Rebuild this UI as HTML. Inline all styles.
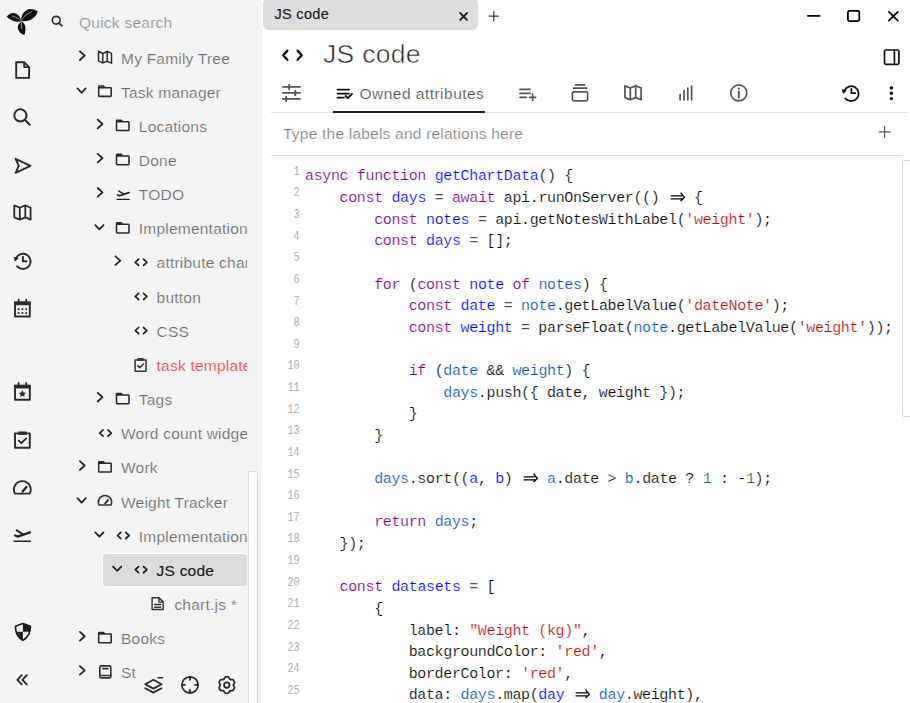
<!DOCTYPE html>
<html><head><meta charset="utf-8"><style>
*{margin:0;padding:0;box-sizing:border-box}
html,body{width:910px;height:703px;overflow:hidden;background:#fff;font-family:"Liberation Sans",sans-serif}
.t{position:absolute;white-space:pre}
#left{position:absolute;left:0;top:0;width:258px;height:703px;background:#f3f3f3}
#gut{position:absolute;left:258px;top:0;width:4px;height:703px;background:#f5f5f5}
#tab{position:absolute;left:262.5px;top:-2.5px;width:215.2px;height:32.7px;background:#dcdcdc;border-radius:6px}
#treeclip{position:absolute;left:0;top:0;width:247px;height:703px;overflow:hidden}
#treebtns{position:absolute;left:135.5px;top:663px;width:112px;height:40px;background:#f3f3f3}
.active{position:absolute;background:#dcdcdc;border-radius:2.5px;box-shadow:0 0 0 1px rgba(255,255,255,0.75)}
#treescroll{position:absolute;left:248px;top:471px;width:10px;height:240px;background:#fff;border:1px solid #d8d8d8;border-radius:2px}
#cscroll{position:absolute;left:901.5px;top:160.2px;width:14px;height:256.5px;background:#fff;border:1px solid #d8d8d8;border-radius:2px}
.hl{position:absolute}
#code{position:absolute;left:305px;margin:0;font-family:"Liberation Mono",monospace;font-size:15px;line-height:21.63px;color:#000;white-space:pre;letter-spacing:-0.36px;-webkit-text-stroke:0.2px #fff}
.arr{vertical-align:baseline;display:inline}
.ln{position:absolute;left:260px;width:39.5px;text-align:right;font-family:"Liberation Mono",monospace;font-size:12.6px;line-height:12.6px;color:#9a9a9a;transform:scaleX(0.8);transform-origin:right center;-webkit-text-stroke:0.15px #fff}
#icons{position:absolute;left:0;top:0;width:910px;height:703px;pointer-events:none}
</style></head>
<body>
<div id="left"></div><div id="gut"></div><div id="tab"></div><div class="t" style="left:79px;top:14.88px;font-size:15.5px;line-height:15.5px;color:#8f8f8f;letter-spacing:0.25px;font-weight:400;-webkit-text-stroke:0.2px #f3f3f3;">Quick search</div><div id="treeclip"><div class="t" style="left:121.0px;top:50.58px;font-size:15.5px;line-height:15.5px;color:#6a6a6a;letter-spacing:0.22px;font-weight:400;-webkit-text-stroke:0.2px #f3f3f3;">My Family Tree</div><div class="t" style="left:121.0px;top:84.73px;font-size:15.5px;line-height:15.5px;color:#6a6a6a;letter-spacing:0.22px;font-weight:400;-webkit-text-stroke:0.2px #f3f3f3;">Task manager</div><div class="t" style="left:138.8px;top:118.88px;font-size:15.5px;line-height:15.5px;color:#6a6a6a;letter-spacing:0.22px;font-weight:400;-webkit-text-stroke:0.2px #f3f3f3;">Locations</div><div class="t" style="left:138.8px;top:153.03px;font-size:15.5px;line-height:15.5px;color:#6a6a6a;letter-spacing:0.22px;font-weight:400;-webkit-text-stroke:0.2px #f3f3f3;">Done</div><div class="t" style="left:138.8px;top:187.18px;font-size:15.5px;line-height:15.5px;color:#6a6a6a;letter-spacing:0.22px;font-weight:400;-webkit-text-stroke:0.2px #f3f3f3;">TODO</div><div class="t" style="left:138.8px;top:221.33px;font-size:15.5px;line-height:15.5px;color:#6a6a6a;letter-spacing:0.22px;font-weight:400;-webkit-text-stroke:0.2px #f3f3f3;">Implementation</div><div class="t" style="left:156.6px;top:255.48px;font-size:15.5px;line-height:15.5px;color:#6a6a6a;letter-spacing:0.22px;font-weight:400;-webkit-text-stroke:0.2px #f3f3f3;">attribute chart</div><div class="t" style="left:156.6px;top:289.63px;font-size:15.5px;line-height:15.5px;color:#6a6a6a;letter-spacing:0.22px;font-weight:400;-webkit-text-stroke:0.2px #f3f3f3;">button</div><div class="t" style="left:156.6px;top:323.78px;font-size:15.5px;line-height:15.5px;color:#6a6a6a;letter-spacing:0.22px;font-weight:400;-webkit-text-stroke:0.2px #f3f3f3;">CSS</div><div class="t" style="left:156.6px;top:357.93px;font-size:15.5px;line-height:15.5px;color:#f23f3f;letter-spacing:0.22px;font-weight:400;-webkit-text-stroke:0.2px #f3f3f3;">task template</div><div class="t" style="left:138.8px;top:392.08px;font-size:15.5px;line-height:15.5px;color:#6a6a6a;letter-spacing:0.22px;font-weight:400;-webkit-text-stroke:0.2px #f3f3f3;">Tags</div><div class="t" style="left:121.0px;top:426.23px;font-size:15.5px;line-height:15.5px;color:#6a6a6a;letter-spacing:0.22px;font-weight:400;-webkit-text-stroke:0.2px #f3f3f3;">Word count widget</div><div class="t" style="left:121.0px;top:460.38px;font-size:15.5px;line-height:15.5px;color:#6a6a6a;letter-spacing:0.22px;font-weight:400;-webkit-text-stroke:0.2px #f3f3f3;">Work</div><div class="t" style="left:121.0px;top:494.53px;font-size:15.5px;line-height:15.5px;color:#6a6a6a;letter-spacing:0.22px;font-weight:400;-webkit-text-stroke:0.2px #f3f3f3;">Weight Tracker</div><div class="t" style="left:138.8px;top:528.68px;font-size:15.5px;line-height:15.5px;color:#6a6a6a;letter-spacing:0.22px;font-weight:400;-webkit-text-stroke:0.2px #f3f3f3;">Implementation</div><div class="active" style="left:103px;top:554px;width:143.6px;height:31.5px"></div><div class="t" style="left:156.6px;top:562.83px;font-size:15.5px;line-height:15.5px;color:#1e1e1e;letter-spacing:0.22px;font-weight:400;-webkit-text-stroke:0.2px #1e1e1e;">JS code</div><div class="t" style="left:174.4px;top:596.98px;font-size:15.5px;line-height:15.5px;color:#6a6a6a;letter-spacing:0.22px;font-weight:400;-webkit-text-stroke:0.2px #f3f3f3;">chart.js *</div><div class="t" style="left:121.0px;top:631.13px;font-size:15.5px;line-height:15.5px;color:#6a6a6a;letter-spacing:0.22px;font-weight:400;-webkit-text-stroke:0.2px #f3f3f3;">Books</div><div class="t" style="left:121.0px;top:665.28px;font-size:15.5px;line-height:15.5px;color:#6a6a6a;letter-spacing:0.22px;font-weight:400;-webkit-text-stroke:0.2px #f3f3f3;">St</div></div><div id="treebtns"></div><div id="treescroll"></div><div class="t" style="left:274.5px;top:7.33px;font-size:14.5px;line-height:14.5px;color:#1a1a1a;letter-spacing:0.3px;font-weight:400;-webkit-text-stroke:0.15px #1a1a1a;">JS code</div><div class="t" style="left:323px;top:41.17px;font-size:26.5px;line-height:26.5px;color:#222;letter-spacing:0.3px;font-weight:400;-webkit-text-stroke:0.6px #fff;">JS code</div><div class="t" style="left:359.5px;top:86.48px;font-size:15.5px;line-height:15.5px;color:#4a4a4a;letter-spacing:0.48px;font-weight:400;-webkit-text-stroke:0.2px #fff;">Owned attributes</div><div class="hl" style="left:271px;top:112px;width:636px;height:1px;background:#dcdcdc"></div><div class="hl" style="left:333px;top:111px;width:151.5px;height:2px;background:#222"></div><div class="t" style="left:283px;top:125.98px;font-size:15.5px;line-height:15.5px;color:#808080;letter-spacing:0.22px;font-weight:400;-webkit-text-stroke:0.2px #fff;">Type the labels and relations here</div><div class="hl" style="left:271px;top:154.6px;width:632px;height:1px;background:#dcdcdc"></div><div id="cscroll"></div><pre id="code" style="top:166.39px"><span style="color:#708">async</span> <span style="color:#708">function</span> <span style="color:#00f">getChartData</span>() {
    <span style="color:#708">const</span> <span style="color:#00f">days</span> = <span style="color:#708">await</span> api.runOnServer(() <svg class="arr" width="17.28" height="13" viewBox="0 0 17.28 13"><path d="M2.6,6.9 H14.2 M2.6,9.9 H14.2 M12.6,3.7 L16.3,8.4 L12.6,12.1" fill="none" stroke="#000" stroke-width="1.35" stroke-linecap="butt" stroke-linejoin="miter"/></svg> {
        <span style="color:#708">const</span> <span style="color:#00f">notes</span> = api.getNotesWithLabel(<span style="color:#a11">&#x27;weight&#x27;</span>);
        <span style="color:#708">const</span> <span style="color:#00f">days</span> = [];

        <span style="color:#708">for</span> (<span style="color:#708">const</span> <span style="color:#00f">note</span> <span style="color:#708">of</span> <span style="color:#05a">notes</span>) {
            <span style="color:#708">const</span> <span style="color:#00f">date</span> = <span style="color:#05a">note</span>.getLabelValue(<span style="color:#a11">&#x27;dateNote&#x27;</span>);
            <span style="color:#708">const</span> <span style="color:#00f">weight</span> = parseFloat(<span style="color:#05a">note</span>.getLabelValue(<span style="color:#a11">&#x27;weight&#x27;</span>));

            <span style="color:#708">if</span> (<span style="color:#05a">date</span> &amp;&amp; <span style="color:#05a">weight</span>) {
                <span style="color:#05a">days</span>.push({ date, weight });
            }
        }

        <span style="color:#05a">days</span>.sort((<span style="color:#00f">a</span>, <span style="color:#00f">b</span>) <svg class="arr" width="17.28" height="13" viewBox="0 0 17.28 13"><path d="M2.6,6.9 H14.2 M2.6,9.9 H14.2 M12.6,3.7 L16.3,8.4 L12.6,12.1" fill="none" stroke="#000" stroke-width="1.35" stroke-linecap="butt" stroke-linejoin="miter"/></svg> <span style="color:#05a">a</span>.date &gt; <span style="color:#05a">b</span>.date ? <span style="color:#164">1</span> : -<span style="color:#164">1</span>);

        <span style="color:#708">return</span> <span style="color:#05a">days</span>;
    });

    <span style="color:#708">const</span> <span style="color:#00f">datasets</span> = [
        {
            label: <span style="color:#a11">&quot;Weight (kg)&quot;</span>,
            backgroundColor: <span style="color:#a11">&#x27;red&#x27;</span>,
            borderColor: <span style="color:#a11">&#x27;red&#x27;</span>,
            data: <span style="color:#05a">days</span>.map(<span style="color:#00f">day</span> <svg class="arr" width="17.28" height="13" viewBox="0 0 17.28 13"><path d="M2.6,6.9 H14.2 M2.6,9.9 H14.2 M12.6,3.7 L16.3,8.4 L12.6,12.1" fill="none" stroke="#000" stroke-width="1.35" stroke-linecap="butt" stroke-linejoin="miter"/></svg> <span style="color:#05a">day</span>.weight),</pre><div class="ln" style="top:165.74px">1</div><div class="ln" style="top:187.37px">2</div><div class="ln" style="top:209.00px">3</div><div class="ln" style="top:230.63px">4</div><div class="ln" style="top:252.26px">5</div><div class="ln" style="top:273.89px">6</div><div class="ln" style="top:295.52px">7</div><div class="ln" style="top:317.15px">8</div><div class="ln" style="top:338.78px">9</div><div class="ln" style="top:360.41px">10</div><div class="ln" style="top:382.04px">11</div><div class="ln" style="top:403.67px">12</div><div class="ln" style="top:425.30px">13</div><div class="ln" style="top:446.93px">14</div><div class="ln" style="top:468.56px">15</div><div class="ln" style="top:490.19px">16</div><div class="ln" style="top:511.82px">17</div><div class="ln" style="top:533.45px">18</div><div class="ln" style="top:555.08px">19</div><div class="ln" style="top:576.71px">20</div><div class="ln" style="top:598.34px">21</div><div class="ln" style="top:619.97px">22</div><div class="ln" style="top:641.60px">23</div><div class="ln" style="top:663.23px">24</div><div class="ln" style="top:684.86px">25</div>
<svg id="icons" width="910" height="703" viewBox="0 0 910 703" stroke-linecap="round" stroke-linejoin="round"><g fill="#111"><path d="M21.6,21.2 C20.2,16.2 16.6,12.6 12.6,12.9 C10,13.1 8,14.8 6.7,16.6 C9.6,20 14.6,22.8 21.6,21.2 Z"/><path d="M21.1,21.3 C20.8,16 23.4,11.4 28.4,9.3 C31.6,8.2 35,9.4 37.7,11.3 C36.1,17.2 31,22 21.1,21.3 Z"/><path d="M21.9,21.5 C24.6,23.4 25.7,26.4 25.5,29.4 C25.3,31.4 24.9,33.2 24.3,35.1 C20.5,33.6 17.8,30.6 17.8,27.2 C17.8,24.8 19.5,22.7 21.9,21.5 Z"/></g><path d="M21.6,20.4 C23.8,16.5 26.8,13.8 31.2,12.0 M21.0,20.3 C18.4,18.2 15.6,16.8 12.4,16.2 M21.5,22.6 C21.3,24.6 21.3,26.6 21.7,28.4" stroke="#d8d8d8" stroke-width="0.6" fill="none"/><path d="M16.2,62.2 h8 l4.9,4.9 v10.8 h-12.9 z M24.2,62.2 v4.9 h4.9" fill="none" stroke="#2b2b2b" stroke-width="1.9" /><circle cx="20.4" cy="115.4" r="6.1" fill="none" stroke="#2b2b2b" stroke-width="2"/><path d="M24.8,119.8 L29.8,124.8" fill="none" stroke="#2b2b2b" stroke-width="2" /><path d="M15.6,158.8 L30.4,165.8 L15.6,172.8 L18.8,165.8 Z" fill="none" stroke="#2b2b2b" stroke-width="1.9" /><path d="M14.3,205.5 L19.8,207.70000000000002 L25.3,205.3 L30.6,207.70000000000002 V219.6 L25.3,217.4 L19.8,219.6 L14.3,217.4 Z M19.8,207.70000000000002 V219.6 M25.3,205.3 V217.4" fill="none" stroke="#2b2b2b" stroke-width="1.8" /><path d="M16.0,258.5 A7.6,7.6 0 1 1 17.2,266.3" fill="none" stroke="#2b2b2b" stroke-width="1.9" /><path d="M13.6,256.8 L18.6,258.2 L15.0,261.6 Z" fill="#2b2b2b" /><path d="M22.9,256.8 V261.2 H26.6" fill="none" stroke="#2b2b2b" stroke-width="1.9" /><path d="M15,302.5 h14.8 v14 h-14.8 z" fill="none" stroke="#2b2b2b" stroke-width="1.9" /><path d="M14.1,301.6 h16.6 v3.6 h-16.6 z" fill="#2b2b2b" /><path d="M18.6,299.6 v3 M26.2,299.6 v3" fill="none" stroke="#2b2b2b" stroke-width="1.8" /><rect x="17.700000000000003" y="308.3" width="1.8" height="1.8" fill="#2b2b2b"/><rect x="17.700000000000003" y="312.1" width="1.8" height="1.8" fill="#2b2b2b"/><rect x="21.5" y="308.3" width="1.8" height="1.8" fill="#2b2b2b"/><rect x="21.5" y="312.1" width="1.8" height="1.8" fill="#2b2b2b"/><rect x="25.3" y="308.3" width="1.8" height="1.8" fill="#2b2b2b"/><rect x="25.3" y="312.1" width="1.8" height="1.8" fill="#2b2b2b"/><path d="M15,385.8 h14.8 v14 h-14.8 z" fill="none" stroke="#2b2b2b" stroke-width="1.9" /><path d="M14.1,384.9 h16.6 v3.6 h-16.6 z" fill="#2b2b2b" /><path d="M18.6,382.9 v3 M26.2,382.9 v3" fill="none" stroke="#2b2b2b" stroke-width="1.8" /><path d="M22.4,390.2 l1.1,2.3 2.5,0.3 -1.85,1.7 0.5,2.5 -2.25,-1.25 -2.25,1.25 0.5,-2.5 -1.85,-1.7 2.5,-0.3 z" fill="#2b2b2b" /><path d="M15,433.4 h14.8 v14.3 h-14.8 z" fill="none" stroke="#2b2b2b" stroke-width="1.9" /><path d="M18.2,431.5 h8.4 v3.4 h-8.4 z" fill="#2b2b2b" /><path d="M18.8,440.6 L21.4,443.2 L26.2,438.4" fill="none" stroke="#2b2b2b" stroke-width="1.9" /><path d="M15.0,493.6 A8.4,8.4 0 1 1 29.7,493.6 Z" fill="none" stroke="#2b2b2b" stroke-width="1.9" /><path d="M22.6,491.6 L26.4,487.0" fill="none" stroke="#2b2b2b" stroke-width="2.3" /><path d="M14.2,541.3 H30.3" fill="none" stroke="#222" stroke-width="1.5" /><path d="M15.0,535.4 L17.599999999999998,536.5999999999999 L30.0,532.4" fill="none" stroke="#222" stroke-width="2.2" /><path d="M16.8,530.4 L22.6,534.0" fill="none" stroke="#222" stroke-width="2.0" /><path d="M22.9,623.5 L30.4,626.2 C30.4,633.5 27.8,637.8 22.9,640.2 C18,637.8 15.4,633.5 15.4,626.2 Z" fill="none" stroke="#1f1f1f" stroke-width="1.7" /><path d="M22.9,623.5 L30.4,626.2 C30.4,628.5 30.2,630.4 29.8,631.8 L22.9,631.8 Z M22.9,631.8 L22.9,640.2 C18.5,638 16.3,634.8 15.8,631.8 Z" fill="#1f1f1f" /><path d="M21.8,675.2 L17.4,679.8 L21.8,684.4 M26.8,675.2 L22.4,679.8 L26.8,684.4" fill="none" stroke="#2b2b2b" stroke-width="1.9" /><circle cx="56.2" cy="20.2" r="3.9" fill="none" stroke="#2b2b2b" stroke-width="1.7"/><path d="M59.1,23.1 L62,26" fill="none" stroke="#2b2b2b" stroke-width="1.7" /><path d="M79.9,51.400000000000006 L84.7,55.7 L79.9,60.0" fill="none" stroke="#222" stroke-width="1.75" /><path d="M98.5,51.2 L102.8,53.5 L107.2,51.300000000000004 L111.5,53.400000000000006 V63.2 L107.2,61.300000000000004 L102.8,62.900000000000006 L98.5,61.1 Z M102.8,53.5 V62.900000000000006 M107.2,51.300000000000004 V61.300000000000004" fill="none" stroke="#2b2b2b" stroke-width="1.45" /><path d="M77.5,88.44999999999999 L81.6,92.75 L85.7,88.44999999999999" fill="none" stroke="#222" stroke-width="1.75" /><path d="M98.7,95.75 V86.64999999999999 Q98.7,86.05 99.3,86.05 H103.39999999999999 L104.7,87.64999999999999 H110.60000000000001 Q111.2,87.64999999999999 111.2,88.24999999999999 V95.75 Q111.2,96.35 110.60000000000001,96.35 H99.3 Q98.7,96.35 98.7,95.75 Z M98.7,87.64999999999999 H104.7" fill="none" stroke="#2b2b2b" stroke-width="1.55" /><path d="M97.7,119.7 L102.5,124.0 L97.7,128.3" fill="none" stroke="#222" stroke-width="1.75" /><path d="M116.5,129.9 V120.8 Q116.5,120.2 117.1,120.2 H121.19999999999999 L122.5,121.8 H128.4 Q129.0,121.8 129.0,122.39999999999999 V129.9 Q129.0,130.5 128.4,130.5 H117.1 Q116.5,130.5 116.5,129.9 Z M116.5,121.8 H122.5" fill="none" stroke="#2b2b2b" stroke-width="1.55" /><path d="M97.7,153.84999999999997 L102.5,158.14999999999998 L97.7,162.45" fill="none" stroke="#222" stroke-width="1.75" /><path d="M116.5,164.04999999999998 V154.94999999999996 Q116.5,154.34999999999997 117.1,154.34999999999997 H121.19999999999999 L122.5,155.95 H128.4 Q129.0,155.95 129.0,156.54999999999998 V164.04999999999998 Q129.0,164.64999999999998 128.4,164.64999999999998 H117.1 Q116.5,164.64999999999998 116.5,164.04999999999998 Z M116.5,155.95 H122.5" fill="none" stroke="#2b2b2b" stroke-width="1.55" /><path d="M97.7,188.0 L102.5,192.3 L97.7,196.60000000000002" fill="none" stroke="#222" stroke-width="1.75" /><path d="M117.0,199.4 H129.236" fill="none" stroke="#222" stroke-width="1.1400000000000001" /><path d="M117.608,194.916 L119.584,195.828 L129.008,192.636" fill="none" stroke="#222" stroke-width="1.6720000000000002" /><path d="M118.976,191.116 L123.384,193.852" fill="none" stroke="#222" stroke-width="1.52" /><path d="M95.3,225.04999999999998 L99.39999999999999,229.35 L103.5,225.04999999999998" fill="none" stroke="#222" stroke-width="1.75" /><path d="M116.5,232.35 V223.24999999999997 Q116.5,222.64999999999998 117.1,222.64999999999998 H121.19999999999999 L122.5,224.25 H128.4 Q129.0,224.25 129.0,224.85 V232.35 Q129.0,232.95 128.4,232.95 H117.1 Q116.5,232.95 116.5,232.35 Z M116.5,224.25 H122.5" fill="none" stroke="#2b2b2b" stroke-width="1.55" /><path d="M115.5,256.29999999999995 L120.30000000000001,260.59999999999997 L115.5,264.9" fill="none" stroke="#222" stroke-width="1.75" /><path d="M138.6,259.2 L135.3,262.29999999999995 L138.6,265.4 M143.5,259.2 L146.9,262.29999999999995 L143.5,265.4" fill="none" stroke="#1e1e1e" stroke-width="1.7" /><path d="M138.6,293.35 L135.3,296.45 L138.6,299.55 M143.5,293.35 L146.9,296.45 L143.5,299.55" fill="none" stroke="#1e1e1e" stroke-width="1.7" /><path d="M138.6,327.5 L135.3,330.59999999999997 L138.6,333.7 M143.5,327.5 L146.9,330.59999999999997 L143.5,333.7" fill="none" stroke="#1e1e1e" stroke-width="1.7" /><path d="M135.1,360.04999999999995 h10.9 v11.2 h-10.9 z" fill="none" stroke="#333" stroke-width="1.5" /><path d="M137.5,358.04999999999995 h6.1 v2.6 h-6.1 z" fill="#333" /><path d="M137.70000000000002,365.65 L139.70000000000002,367.65 L143.4,363.94999999999993" fill="none" stroke="#333" stroke-width="1.5" /><path d="M97.7,392.9 L102.5,397.2 L97.7,401.5" fill="none" stroke="#222" stroke-width="1.75" /><path d="M116.5,403.09999999999997 V394.0 Q116.5,393.4 117.1,393.4 H121.19999999999999 L122.5,395.0 H128.4 Q129.0,395.0 129.0,395.6 V403.09999999999997 Q129.0,403.7 128.4,403.7 H117.1 Q116.5,403.7 116.5,403.09999999999997 Z M116.5,395.0 H122.5" fill="none" stroke="#2b2b2b" stroke-width="1.55" /><path d="M103.0,429.95 L99.7,433.04999999999995 L103.0,436.15 M107.89999999999999,429.95 L111.3,433.04999999999995 L107.89999999999999,436.15" fill="none" stroke="#1e1e1e" stroke-width="1.7" /><path d="M79.9,461.19999999999993 L84.7,465.49999999999994 L79.9,469.79999999999995" fill="none" stroke="#222" stroke-width="1.75" /><path d="M98.7,471.3999999999999 V462.29999999999995 Q98.7,461.69999999999993 99.3,461.69999999999993 H103.39999999999999 L104.7,463.29999999999995 H110.60000000000001 Q111.2,463.29999999999995 111.2,463.9 V471.3999999999999 Q111.2,471.99999999999994 110.60000000000001,471.99999999999994 H99.3 Q98.7,471.99999999999994 98.7,471.3999999999999 Z M98.7,463.29999999999995 H104.7" fill="none" stroke="#2b2b2b" stroke-width="1.55" /><path d="M77.5,498.25 L81.6,502.54999999999995 L85.7,498.25" fill="none" stroke="#222" stroke-width="1.75" /><path d="M99.1,505.04999999999995 A6.6,6.6 0 1 1 110.89999999999999,505.04999999999995 Z" fill="none" stroke="#333" stroke-width="1.6" /><path d="M105.2,503.45 L108.0,500.04999999999995" fill="none" stroke="#333" stroke-width="2.0" /><path d="M95.3,532.4 L99.39999999999999,536.6999999999999 L103.5,532.4" fill="none" stroke="#222" stroke-width="1.75" /><path d="M120.8,532.4 L117.5,535.5 L120.8,538.5999999999999 M125.69999999999999,532.4 L129.1,535.5 L125.69999999999999,538.5999999999999" fill="none" stroke="#1e1e1e" stroke-width="1.7" /><path d="M113.1,566.5500000000001 L117.19999999999999,570.85 L121.30000000000001,566.5500000000001" fill="none" stroke="#222" stroke-width="1.75" /><path d="M138.6,566.5500000000001 L135.3,569.6500000000001 L138.6,572.75 M143.5,566.5500000000001 L146.9,569.6500000000001 L143.5,572.75" fill="none" stroke="#1e1e1e" stroke-width="1.7" /><path d="M152.1,597.8000000000001 h6.8 l4.3,4.3 v7.4 h-11.1 z M158.89999999999998,597.8000000000001 v4.3 h4.3 M154.6,604.5 h6 M154.6,607.2 h6" fill="none" stroke="#333" stroke-width="1.4" /><path d="M79.9,631.95 L84.7,636.25 L79.9,640.55" fill="none" stroke="#222" stroke-width="1.75" /><path d="M98.7,642.15 V633.0500000000001 Q98.7,632.45 99.3,632.45 H103.39999999999999 L104.7,634.05 H110.60000000000001 Q111.2,634.05 111.2,634.65 V642.15 Q111.2,642.75 110.60000000000001,642.75 H99.3 Q98.7,642.75 98.7,642.15 Z M98.7,634.05 H104.7" fill="none" stroke="#2b2b2b" stroke-width="1.55" /><path d="M79.9,666.1 L84.7,670.4 L79.9,674.6999999999999" fill="none" stroke="#222" stroke-width="1.75" /><rect x="99.8" y="665.9" width="11" height="12.0" rx="1.3" fill="none" stroke="#333" stroke-width="1.6"/><path d="M99.8,675.5 H110.8 M102.8,668.6 H108.0" fill="none" stroke="#333" stroke-width="1.6" /><path d="M153.4,679.8 L161.6,684.2 L153.4,688.6 L145.2,684.2 Z M145.2,688.2 L153.4,692.6 L161.6,688.2" fill="none" stroke="#2b2b2b" stroke-width="1.8" /><path d="M158,677.8 H162.6" fill="none" stroke="#2b2b2b" stroke-width="1.6" /><circle cx="190" cy="684.9" r="8.1" fill="none" stroke="#2b2b2b" stroke-width="1.8"/><path d="M190,677.2 v2.6 M190,690 v2.6 M182.3,684.9 h2.6 M195.1,684.9 h2.6" fill="none" stroke="#2b2b2b" stroke-width="1.8" /><path d="M223.11,679.63 L224.83,677.76 L225.22,676.95 L228.38,676.95 L228.77,677.76 L230.49,679.63 L229.69,679.17 L232.17,679.73 L233.06,679.65 L234.65,682.40 L234.14,683.13 L233.38,685.56 L233.38,684.64 L234.14,687.07 L234.65,687.80 L233.06,690.55 L232.17,690.47 L229.69,691.03 L230.49,690.57 L228.77,692.44 L228.38,693.25 L225.22,693.25 L224.83,692.44 L223.11,690.57 L223.91,691.03 L221.43,690.47 L220.54,690.55 L218.95,687.80 L219.46,687.07 L220.22,684.64 L220.22,685.56 L219.46,683.13 L218.95,682.40 L220.54,679.65 L221.43,679.73 L223.91,679.17 Z" fill="none" stroke="#2b2b2b" stroke-width="1.7" /><circle cx="226.8" cy="685.1" r="2.7" fill="none" stroke="#2b2b2b" stroke-width="1.8"/><path d="M460.2,13 L467,19.8 M467,13 L460.2,19.8" fill="none" stroke="#222" stroke-width="1.9" /><path d="M493.8,11.6 V20.8 M489.2,16.2 H498.4" fill="none" stroke="#333" stroke-width="1.2" /><path d="M807.2,15.9 H820.3" fill="none" stroke="#000" stroke-width="1.7" stroke-linecap="butt"/><rect x="847.9" y="10.8" width="11.4" height="10.2" rx="1.6" fill="none" stroke="#000" stroke-width="1.75"/><path d="M888.9,11.8 L897.8,20.6 M897.8,11.8 L888.9,20.6" fill="none" stroke="#000" stroke-width="1.7" /><path d="M287.4,50.6 L283.2,55.2 L287.4,59.8 M297.6,50.6 L301.8,55.2 L297.6,59.8" fill="none" stroke="#111" stroke-width="2.3" /><rect x="884.5" y="50" width="14.4" height="14.3" rx="1.5" fill="none" stroke="#111" stroke-width="1.7"/><path d="M894.4,50 V64.3" fill="none" stroke="#111" stroke-width="1.7" /><path d="M282.8,86.9 H300 M282.8,92.9 H300 M282.8,98.9 H300" fill="none" stroke="#555" stroke-width="1.7" /><path d="M289.2,84.6 v4.6 M295.3,90.6 v4.6 M286.2,96.6 v4.6" fill="none" stroke="#555" stroke-width="1.9" /><path d="M337.5,89.6 H349 M337.5,93.6 H349 M337.5,97.6 H344" fill="none" stroke="#111" stroke-width="1.8" /><path d="M345.6,96.0 L347.8,98.2 L352,93.8" fill="none" stroke="#111" stroke-width="1.8" /><path d="M520,89.4 H530 M520,93.4 H530 M520,97.4 H526" fill="none" stroke="#555" stroke-width="1.7" /><path d="M532.6,94.2 V100.4 M529.5,97.3 H535.7" fill="none" stroke="#555" stroke-width="1.7" /><path d="M575.6,84.8 H584.6 M573.6,88.2 H586.6" fill="none" stroke="#555" stroke-width="1.7" /><rect x="572.4" y="91.8" width="15.2" height="9.0" rx="1.2" fill="none" stroke="#555" stroke-width="1.7"/><path d="M624.9,85.9 L630.3,88.0 L635.6999999999999,85.7 L641.1,88.0 V99.7 L635.6999999999999,97.60000000000001 L630.3,99.7 L624.9,97.60000000000001 Z M630.3,88.0 V99.7 M635.6999999999999,85.7 V97.60000000000001" fill="none" stroke="#555" stroke-width="1.7" /><path d="M680.1,94.6 V99.8 M684,90.6 V99.8 M687.8,88 V99.8 M691.6,86.2 V99.8" fill="none" stroke="#555" stroke-width="1.7" /><circle cx="738.8" cy="92.9" r="8.0" fill="none" stroke="#555" stroke-width="1.7"/><path d="M738.8,91.6 V97.2" fill="none" stroke="#555" stroke-width="1.9" /><circle cx="738.8" cy="88.6" r="1.1" fill="#555"/><path d="M844.2,90.8 A7.5,7.5 0 1 1 845.3,98.4" fill="none" stroke="#111" stroke-width="1.8" /><path d="M841.6,89.2 L846.8,90.4 L843.2,93.9 Z" fill="#111" /><path d="M851.4,88.8 V93.2 H855.2" fill="none" stroke="#111" stroke-width="1.8" /><circle cx="891.4" cy="87.9" r="1.7" fill="#000"/><circle cx="891.4" cy="93.2" r="1.7" fill="#000"/><circle cx="891.4" cy="98.6" r="1.7" fill="#000"/><path d="M884.6,126.4 V137.4 M879.1,131.9 H890.1" fill="none" stroke="#555" stroke-width="1.2" /></svg>
</body></html>
